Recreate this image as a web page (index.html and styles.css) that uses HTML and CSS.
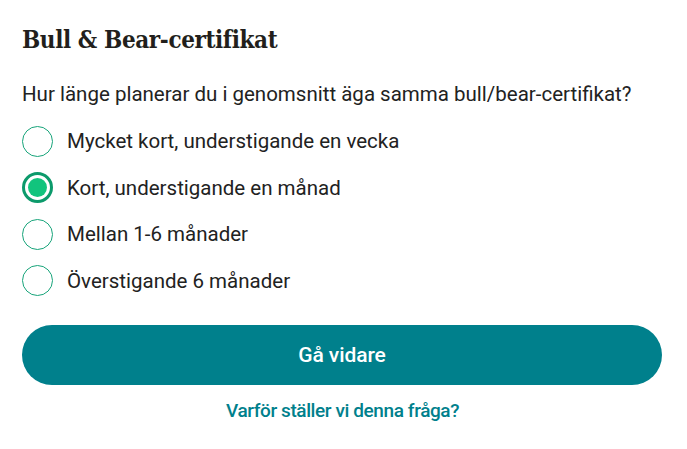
FILE: index.html
```html
<!DOCTYPE html>
<html lang="sv">
<head>
<meta charset="utf-8">
<link rel="stylesheet" href="styles.css">
</head>
<body>
<main class="card">
  <h1 class="title">Bull &amp; Bear-certifikat</h1>
  <p class="question">Hur länge planerar du i genomsnitt äga samma bull/bear-certifikat?</p>
  <ul class="options">
    <li class="option"><span class="radio"></span><span class="label">Mycket kort, understigande en vecka</span></li>
    <li class="option"><span class="radio checked"></span><span class="label">Kort, understigande en månad</span></li>
    <li class="option"><span class="radio"></span><span class="label">Mellan 1-6 månader</span></li>
    <li class="option"><span class="radio"></span><span class="label">Överstigande 6 månader</span></li>
  </ul>
  <button class="primary">Gå vidare</button>
  <a class="why" href="#">Varför ställer vi denna fråga?</a>
</main>
</body>
</html>
```
FILE: styles.css
```css
* { box-sizing: border-box; }
html, body { margin: 0; padding: 0; background: #fff; }
body { font-family: Roboto, "Noto Sans", sans-serif; color: #222; }
.card {
  width: 687px;
  padding: 22px 25px 0 22px;
  display: flex;
  flex-direction: column;
}
.title {
  margin: 0;
  font-family: "DejaVu Serif", serif;
  font-stretch: condensed;
  font-weight: bold;
  font-size: 24px;
  line-height: 36px;
  color: #221f1c;
  letter-spacing: -0.4px;
}
.question {
  margin: 21px 0 0;
  font-size: 20.5px;
  line-height: 30px;
  color: #222;
}
.options {
  list-style: none;
  margin: 16.5px 0 0;
  padding: 0;
  display: flex;
  flex-direction: column;
  gap: 15.5px;
}
.option {
  display: flex;
  align-items: center;
  gap: 14px;
  height: 31px;
}
.radio {
  width: 31px;
  height: 31px;
  border-radius: 50%;
  border: 1px solid #17a47a;
  flex: none;
  display: flex;
  align-items: center;
  justify-content: center;
}
.radio.checked {
  border: 3px solid #0c9a6b;
}
.radio.checked::after {
  content: "";
  width: 19px;
  height: 19px;
  border-radius: 50%;
  background: #11c47d;
}
.label {
  font-size: 20.5px;
  color: #222;
}
.primary {
  margin-top: 29px;
  height: 60px;
  border: none;
  border-radius: 30px;
  background: #00808c;
  color: #fff;
  font-family: Roboto, sans-serif;
  font-weight: 500;
  font-size: 21px;
  letter-spacing: -0.1px;
  width: 640px;
}
.why {
  align-self: center;
  margin-top: 14px;
  margin-left: 1px;
  color: #00808c;
  font-weight: 500;
  font-size: 19px;
  letter-spacing: -0.4px;
  text-decoration: none;
}
```
